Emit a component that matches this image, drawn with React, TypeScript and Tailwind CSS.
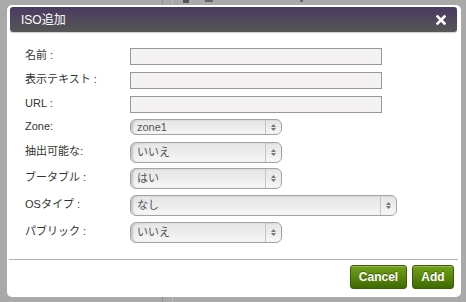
import { ReactNode } from 'react'

const font = { fontFamily: '"Liberation Sans", Arial, "Noto Sans CJK JP", sans-serif' }

const textRows = [
  { label: '名前 :', top: 'mt-[16px]' },
  { label: '表示テキスト :', top: 'mt-[7px]' },
  { label: 'URL :', top: 'mt-[7px]' },
]

const selectRows = [
  { label: 'Zone:', value: 'zone1', wide: false, small: true, top: 'mt-[6px]' },
  { label: '抽出可能な:', value: 'いいえ', wide: false, small: false, top: 'mt-[7px]' },
  { label: 'ブータブル :', value: 'はい', wide: false, small: false, top: 'mt-[5px]' },
  { label: 'OSタイプ :', value: 'なし', wide: true, small: false, top: 'mt-[6px]' },
  { label: 'パブリック :', value: 'いいえ', wide: false, small: false, top: 'mt-[6px]' },
]

function Row({ label, top, height, children }: { label: string; top: string; height: string; children: ReactNode }) {
  return (
    <div className={`flex items-center ${top} ${height}`}>
      <div className="w-[105px] shrink-0 text-[11px] leading-none text-[#333] -mt-[2px]">{label}</div>
      {children}
    </div>
  )
}

function FakeSelect({ value, wide, small }: { value: string; wide: boolean; small: boolean }) {
  return (
    <div
      className={`flex items-stretch ${wide ? 'w-[267px]' : 'w-[152px]'} ${small ? 'h-[16px]' : 'h-[21px]'} rounded-[6px] border border-[#a3a3a3] bg-gradient-to-b from-[#e6e6e6] via-[#ececec] to-[#f8f8f8] shadow-[inset_2px_0_2px_rgba(0,0,0,0.18),inset_0_-1px_1px_rgba(255,255,255,0.9)]`}
    >
      <div className="flex-1 flex items-center pl-[6px] text-[11px] leading-none text-[#555]">{value}</div>
      <div className="w-[16px] border-l border-[#c4c4c4] flex flex-col items-center justify-center gap-[1px]">
        <svg width="5" height="3" viewBox="0 0 5 3"><path d="M2.5 0L5 3H0z" fill="#777" /></svg>
        <svg width="5" height="3" viewBox="0 0 5 3"><path d="M0 0h5L2.5 3z" fill="#777" /></svg>
      </div>
    </div>
  )
}

function GreenButton({ label, width }: { label: string; width: string }) {
  return (
    <button
      className={`${width} h-[24px] rounded-[3px] border border-[#3a5d0c] bg-gradient-to-b from-[#73a319] to-[#3f6a02] text-white text-[12px] font-bold leading-none [text-shadow:0_-1px_0_rgba(0,0,0,0.35)] shadow-[inset_0_1px_0_rgba(255,255,255,0.25)]`}
    >
      {label}
    </button>
  )
}

export default function App() {
  return (
    <div className="relative w-[466px] h-[302px] overflow-hidden bg-[#a9a9a9] pt-[5px] pl-[7px]" style={font}>
      {/* page behind the dialog */}
      <div className="absolute left-[162px] top-0 h-full w-px bg-[#8f8f8f]" />
      <div className="absolute left-[172px] top-0 h-full w-px bg-[#bdbdbd]" />
      <div className="absolute left-[183px] top-0 h-[3px] w-[6px] bg-[#555]" />
      <div className="absolute left-[205px] top-0 h-[2px] w-[8px] bg-[#666]" />
      <div className="absolute left-[300px] top-0 h-[2px] w-[3px] bg-[#666]" />

      <div className="relative w-[454px] h-[292px] rounded-[5px] bg-white pt-[2px] pl-[3px] pr-[4px] flex flex-col">
        <div className="h-[25px] rounded-[3px] bg-gradient-to-b from-[#4a3a60] to-[#565656] flex items-center justify-between pl-[11px] pr-[11px] shadow-[0_1px_1px_rgba(0,0,0,0.2)]">
          <span className="text-white text-[12px] leading-none">ISO追加</span>
          <svg width="10" height="10" viewBox="0 0 10 10">
            <path d="M1.5 1.5L8.5 8.5M8.5 1.5L1.5 8.5" stroke="white" strokeWidth="2.6" strokeLinecap="square" />
          </svg>
        </div>

        <div className="pl-[15px] flex flex-col">
          {textRows.map((r) => (
            <Row key={r.label} label={r.label} top={r.top} height="h-[17px]">
              <input className="w-[252px] h-[17px] border border-[#999] bg-[#f3f1f2] outline-none" />
            </Row>
          ))}
          {selectRows.map((r) => (
            <Row key={r.label} label={r.label} top={r.top} height={r.small ? 'h-[16px]' : 'h-[21px]'}>
              <FakeSelect value={r.value} wide={r.wide} small={r.small} />
            </Row>
          ))}
        </div>

        <div className="mt-[16px] ml-[-1px] mr-[-1px] h-px bg-[#b4b4b4]" />

        <div className="flex justify-end gap-[5px] mt-[5px] pr-[3px]">
          <GreenButton label="Cancel" width="w-[57px]" />
          <GreenButton label="Add" width="w-[42px]" />
        </div>
      </div>
    </div>
  )
}
